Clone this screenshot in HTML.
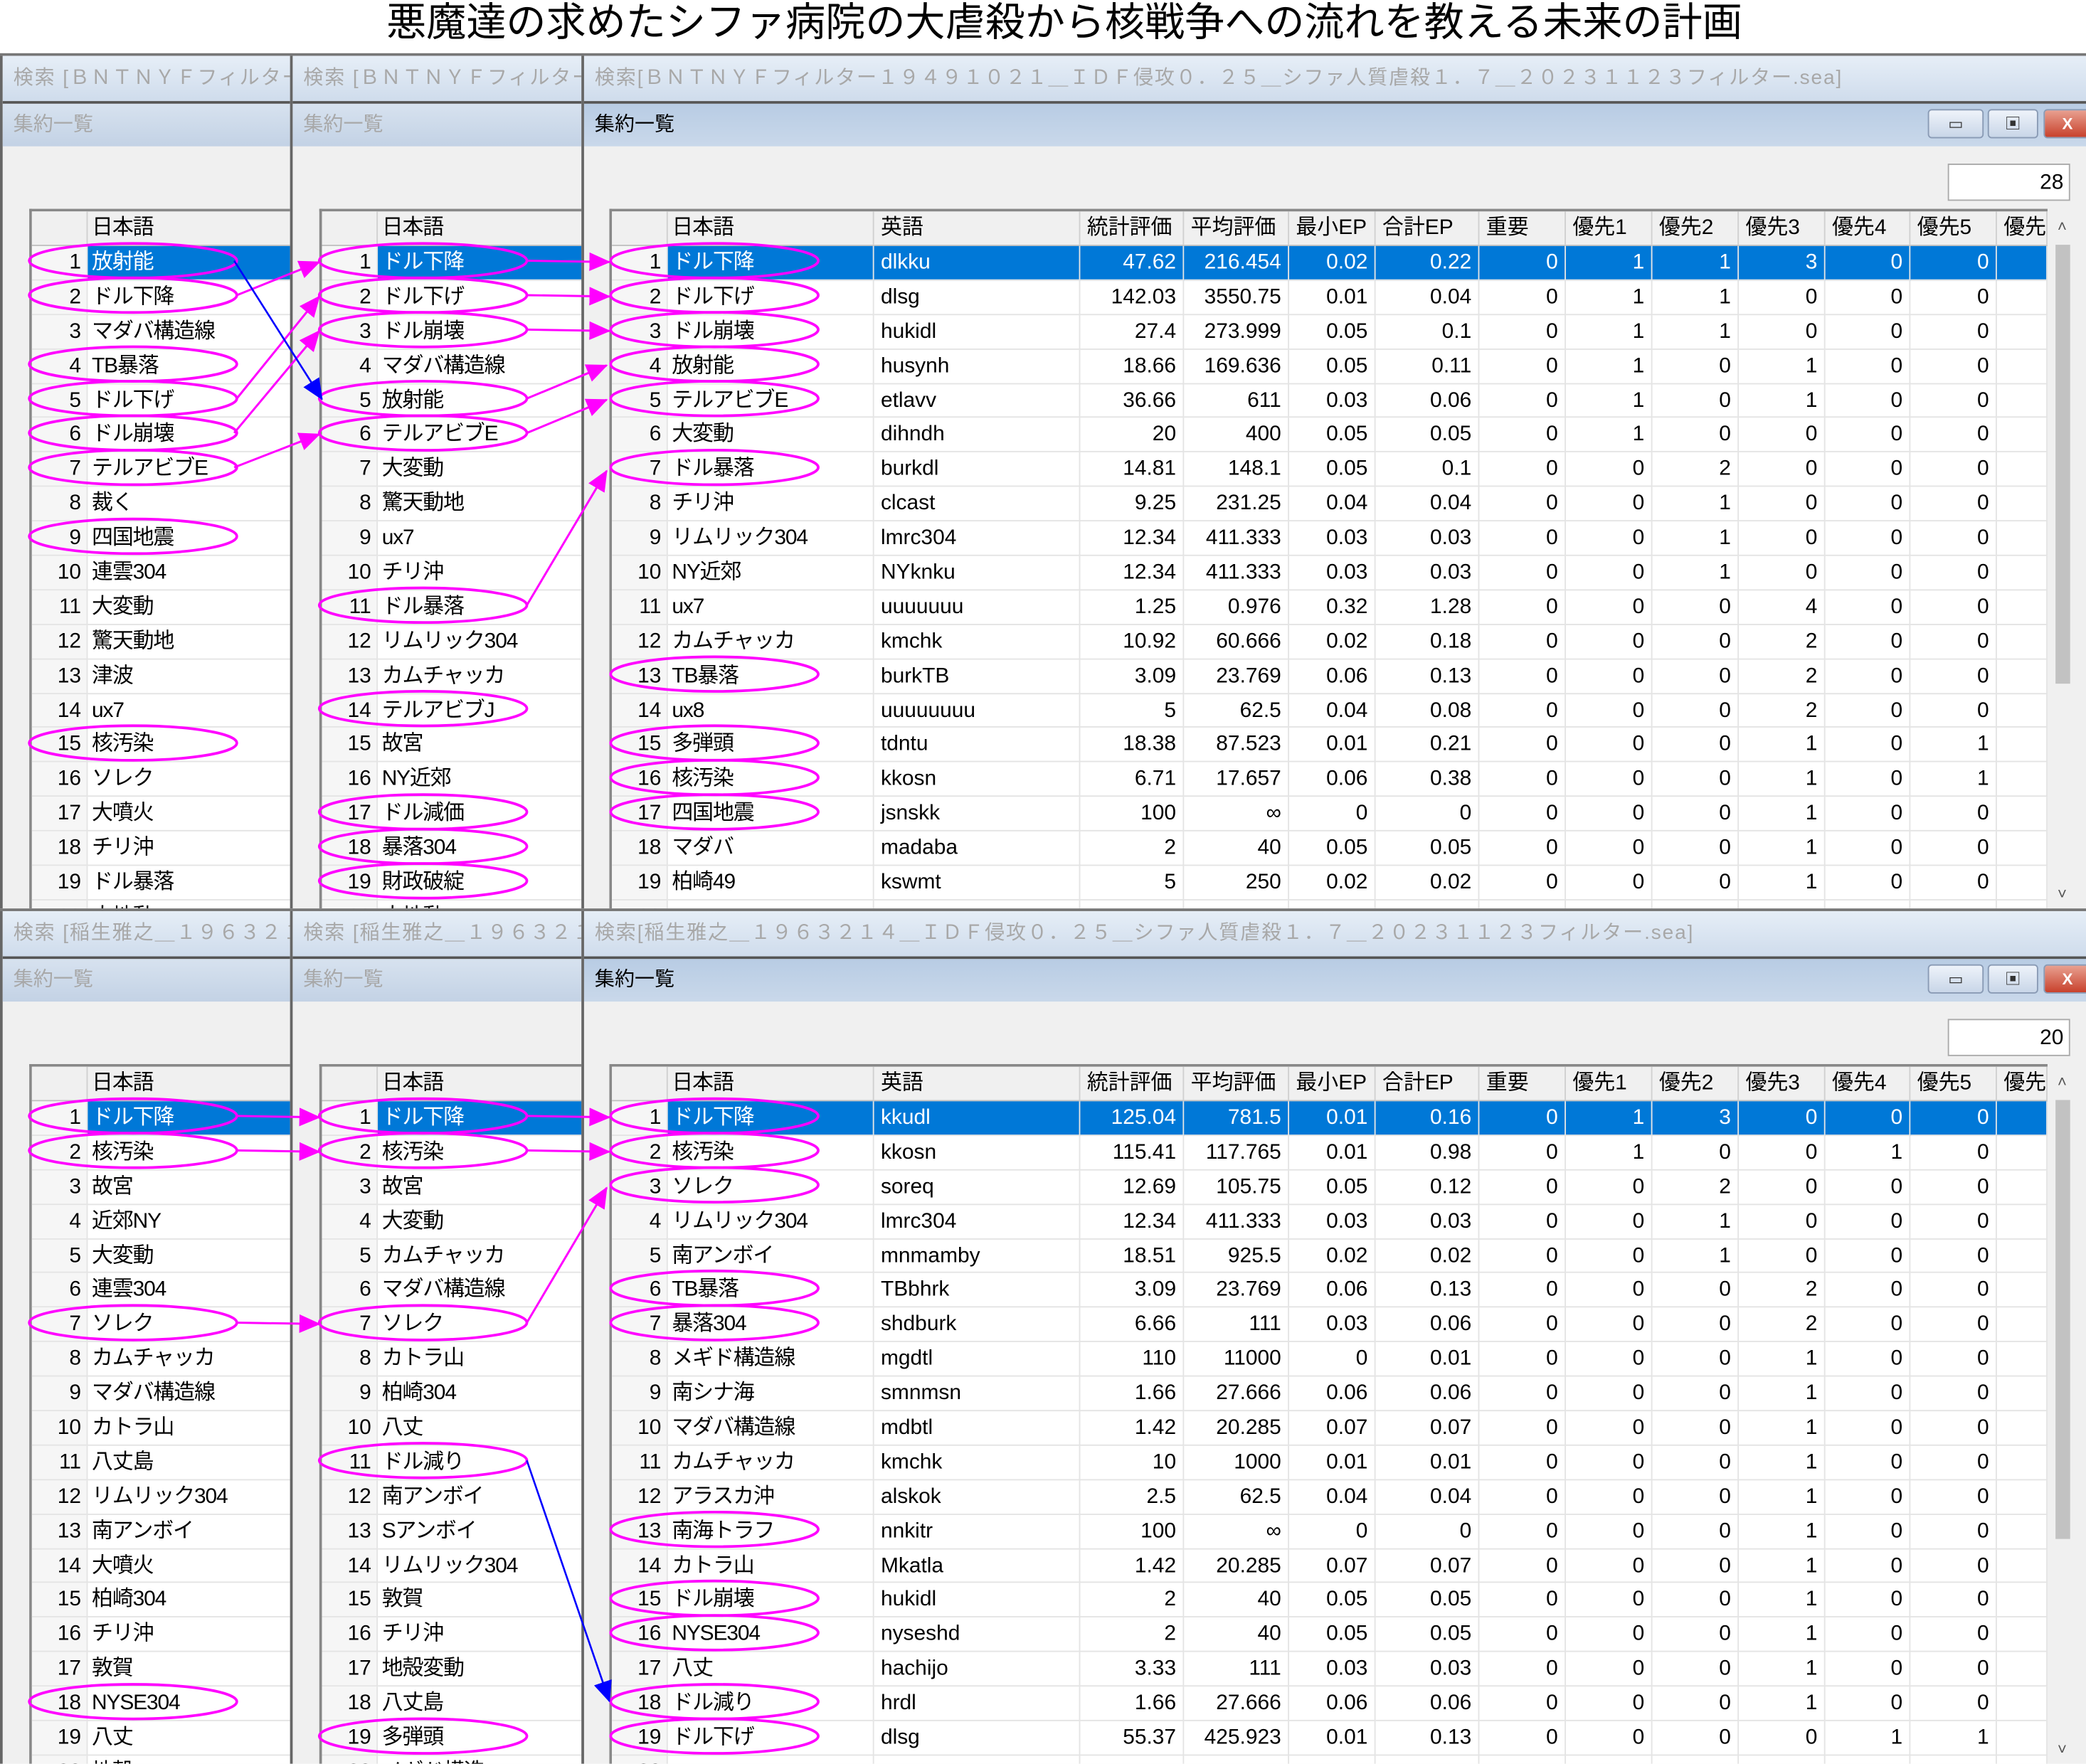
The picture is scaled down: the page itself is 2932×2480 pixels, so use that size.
<!DOCTYPE html>
<html><head><meta charset="utf-8">
<style>
html,body{margin:0;padding:0;background:#fff;width:2932px;height:2478px;overflow:hidden}
#s{position:absolute;left:0;top:0;width:1568px;height:1326px;transform:scale(1.87);transform-origin:0 0;font-family:"Liberation Sans","Noto Sans CJK JP",sans-serif;color:#000}
.ttl{position:absolute;left:0;top:0;width:1600px;text-align:center;font-size:30px;line-height:36px}
.pan{position:absolute;left:0;width:1568px;height:643px;background:#f0f0f0;border-top:2px solid #777;box-sizing:border-box;overflow:hidden}
.w{position:absolute;top:0;height:643px;overflow:hidden;border-left:2px solid #666;box-sizing:border-box;background:#f0f0f0}
.tb{position:absolute;left:0;top:0;right:0;height:34px;background:linear-gradient(#e6eef7,#cfdcec);border-bottom:2px solid #555;color:#a8a8a8;font-size:15px;line-height:34px;padding-left:8px;white-space:nowrap;letter-spacing:1px}
.sb{position:absolute;left:0;top:36px;right:0;height:32px;background:linear-gradient(#d7e2ef,#c3d2e5);color:#a8a8a8;font-size:15px;line-height:32px;padding-left:8px}
.act .sb{background:linear-gradient(#b8cce4,#c9d8ea);color:#000}
.t{position:absolute;top:115px;border-left:2px solid #888;border-top:2px solid #888}
.hd,.r{display:flex}
.hd{height:26px;background:#f0f0f0}
.r{height:25.9px;background:#fff}
.t span{flex:none;box-sizing:border-box;border-right:1px solid #e4e4e4;border-bottom:1px solid #e4e4e4;white-space:nowrap;overflow:hidden;font-size:16px;line-height:25px;padding:0 5px;text-align:right}
.hd span{text-align:left;border-right:1px solid #d0d0d0;border-bottom:1px solid #c0c0c0}
.t span:nth-child(1){width:42px;background:#f6f6f6;padding-right:4px}
.hd span:nth-child(1){background:#f0f0f0}
.t span:nth-child(2){width:200px;text-align:left;padding-left:3px;letter-spacing:-0.6px}
.rt span:nth-child(2){width:155px}
.rt span:nth-child(3){width:155px;text-align:left}
.rt span:nth-child(4){width:78px}
.rt span:nth-child(5){width:79px}
.rt span:nth-child(6){width:65px}
.rt span:nth-child(7){width:78px}
.rt span:nth-child(8),.rt span:nth-child(9),.rt span:nth-child(10),.rt span:nth-child(11),.rt span:nth-child(13){width:65px}
.rt span:nth-child(12){width:64px}
.rt span:nth-child(14){width:38px}
.sel span:not(:first-child){background:#0078d7;color:#fff}
.cnt{position:absolute;left:1025px;top:81px;width:92px;height:28px;background:#fff;border:1px solid #aaa;font-size:16px;line-height:28px;text-align:right;padding-right:4px;box-sizing:border-box}
.btn{position:absolute;top:40px;height:22px;border:1px solid #8a9bb5;border-radius:3px;background:linear-gradient(#eef3fa,#c9d6e8);box-sizing:border-box;font-size:12px;text-align:center;line-height:20px;color:#333}
.scr{position:absolute;left:1103px;top:115px;width:16px;height:530px;background:#f0f0f0;font-size:12px;text-align:center;color:#555}
.thumb{position:absolute;left:3px;top:27px;width:11px;height:330px;background:#c2c2c2}
</style></head><body><div id="s">
<div class="ttl">悪魔達の求めたシファ病院の大虐殺から核戦争への流れを教える未来の計画</div>

<!-- TOP PANEL -->
<div class="pan" style="top:40px">
 <div class="w" style="left:0;width:220px">
  <div class="tb">検索 [ＢＮＴＮＹＦフィルター１９４９</div><div class="sb">集約一覧</div>
  <div class="t" style="left:20px">
   <div class="hd"><span></span><span>日本語</span></div>
   <div class="r sel"><span>1</span><span>放射能</span></div>
   <div class="r"><span>2</span><span>ドル下降</span></div>
   <div class="r"><span>3</span><span>マダバ構造線</span></div>
   <div class="r"><span>4</span><span>TB暴落</span></div>
   <div class="r"><span>5</span><span>ドル下げ</span></div>
   <div class="r"><span>6</span><span>ドル崩壊</span></div>
   <div class="r"><span>7</span><span>テルアビブE</span></div>
   <div class="r"><span>8</span><span>裁く</span></div>
   <div class="r"><span>9</span><span>四国地震</span></div>
   <div class="r"><span>10</span><span>連雲304</span></div>
   <div class="r"><span>11</span><span>大変動</span></div>
   <div class="r"><span>12</span><span>驚天動地</span></div>
   <div class="r"><span>13</span><span>津波</span></div>
   <div class="r"><span>14</span><span>ux7</span></div>
   <div class="r"><span>15</span><span>核汚染</span></div>
   <div class="r"><span>16</span><span>ソレク</span></div>
   <div class="r"><span>17</span><span>大噴火</span></div>
   <div class="r"><span>18</span><span>チリ沖</span></div>
   <div class="r"><span>19</span><span>ドル暴落</span></div>
   <div class="r"><span>20</span><span>大地動</span></div>
  </div>
 </div>
 <div class="w" style="left:218px;width:221px">
  <div class="tb">検索 [ＢＮＴＮＹＦフィルター１９４９</div><div class="sb">集約一覧</div>
  <div class="t" style="left:20px">
   <div class="hd"><span></span><span>日本語</span></div>
   <div class="r sel"><span>1</span><span>ドル下降</span></div>
   <div class="r"><span>2</span><span>ドル下げ</span></div>
   <div class="r"><span>3</span><span>ドル崩壊</span></div>
   <div class="r"><span>4</span><span>マダバ構造線</span></div>
   <div class="r"><span>5</span><span>放射能</span></div>
   <div class="r"><span>6</span><span>テルアビブE</span></div>
   <div class="r"><span>7</span><span>大変動</span></div>
   <div class="r"><span>8</span><span>驚天動地</span></div>
   <div class="r"><span>9</span><span>ux7</span></div>
   <div class="r"><span>10</span><span>チリ沖</span></div>
   <div class="r"><span>11</span><span>ドル暴落</span></div>
   <div class="r"><span>12</span><span>リムリック304</span></div>
   <div class="r"><span>13</span><span>カムチャッカ</span></div>
   <div class="r"><span>14</span><span>テルアビブJ</span></div>
   <div class="r"><span>15</span><span>故宮</span></div>
   <div class="r"><span>16</span><span>NY近郊</span></div>
   <div class="r"><span>17</span><span>ドル減価</span></div>
   <div class="r"><span>18</span><span>暴落304</span></div>
   <div class="r"><span>19</span><span>財政破綻</span></div>
   <div class="r"><span>20</span><span>大地動</span></div>
  </div>
 </div>
 <div class="w act" style="left:437px;width:1131px">
  <div class="tb">検索[ＢＮＴＮＹＦフィルター１９４９１０２１＿ＩＤＦ侵攻０．２５＿シファ人質虐殺１．７＿２０２３１１２３フィルター.sea]</div><div class="sb">集約一覧</div>
  <div class="btn" style="left:1010px;width:42px">▭</div><div class="btn" style="left:1055px;width:38px">▣</div><div class="btn" style="left:1097px;width:36px;background:linear-gradient(#e8a090,#c8412c);color:#fff;font-weight:bold">X</div>
  <div class="cnt">28</div>
  <div class="t rt" style="left:19px">
   <div class="hd"><span></span><span>日本語</span><span>英語</span><span>統計評価</span><span>平均評価</span><span>最小EP</span><span>合計EP</span><span>重要</span><span>優先1</span><span>優先2</span><span>優先3</span><span>優先4</span><span>優先5</span><span>優先</span></div>
   <div class="r sel"><span>1</span><span>ドル下降</span><span>dlkku</span><span>47.62</span><span>216.454</span><span>0.02</span><span>0.22</span><span>0</span><span>1</span><span>1</span><span>3</span><span>0</span><span>0</span><span></span></div>
   <div class="r"><span>2</span><span>ドル下げ</span><span>dlsg</span><span>142.03</span><span>3550.75</span><span>0.01</span><span>0.04</span><span>0</span><span>1</span><span>1</span><span>0</span><span>0</span><span>0</span><span></span></div>
   <div class="r"><span>3</span><span>ドル崩壊</span><span>hukidl</span><span>27.4</span><span>273.999</span><span>0.05</span><span>0.1</span><span>0</span><span>1</span><span>1</span><span>0</span><span>0</span><span>0</span><span></span></div>
   <div class="r"><span>4</span><span>放射能</span><span>husynh</span><span>18.66</span><span>169.636</span><span>0.05</span><span>0.11</span><span>0</span><span>1</span><span>0</span><span>1</span><span>0</span><span>0</span><span></span></div>
   <div class="r"><span>5</span><span>テルアビブE</span><span>etlavv</span><span>36.66</span><span>611</span><span>0.03</span><span>0.06</span><span>0</span><span>1</span><span>0</span><span>1</span><span>0</span><span>0</span><span></span></div>
   <div class="r"><span>6</span><span>大変動</span><span>dihndh</span><span>20</span><span>400</span><span>0.05</span><span>0.05</span><span>0</span><span>1</span><span>0</span><span>0</span><span>0</span><span>0</span><span></span></div>
   <div class="r"><span>7</span><span>ドル暴落</span><span>burkdl</span><span>14.81</span><span>148.1</span><span>0.05</span><span>0.1</span><span>0</span><span>0</span><span>2</span><span>0</span><span>0</span><span>0</span><span></span></div>
   <div class="r"><span>8</span><span>チリ沖</span><span>clcast</span><span>9.25</span><span>231.25</span><span>0.04</span><span>0.04</span><span>0</span><span>0</span><span>1</span><span>0</span><span>0</span><span>0</span><span></span></div>
   <div class="r"><span>9</span><span>リムリック304</span><span>lmrc304</span><span>12.34</span><span>411.333</span><span>0.03</span><span>0.03</span><span>0</span><span>0</span><span>1</span><span>0</span><span>0</span><span>0</span><span></span></div>
   <div class="r"><span>10</span><span>NY近郊</span><span>NYknku</span><span>12.34</span><span>411.333</span><span>0.03</span><span>0.03</span><span>0</span><span>0</span><span>1</span><span>0</span><span>0</span><span>0</span><span></span></div>
   <div class="r"><span>11</span><span>ux7</span><span>uuuuuuu</span><span>1.25</span><span>0.976</span><span>0.32</span><span>1.28</span><span>0</span><span>0</span><span>0</span><span>4</span><span>0</span><span>0</span><span></span></div>
   <div class="r"><span>12</span><span>カムチャッカ</span><span>kmchk</span><span>10.92</span><span>60.666</span><span>0.02</span><span>0.18</span><span>0</span><span>0</span><span>0</span><span>2</span><span>0</span><span>0</span><span></span></div>
   <div class="r"><span>13</span><span>TB暴落</span><span>burkTB</span><span>3.09</span><span>23.769</span><span>0.06</span><span>0.13</span><span>0</span><span>0</span><span>0</span><span>2</span><span>0</span><span>0</span><span></span></div>
   <div class="r"><span>14</span><span>ux8</span><span>uuuuuuuu</span><span>5</span><span>62.5</span><span>0.04</span><span>0.08</span><span>0</span><span>0</span><span>0</span><span>2</span><span>0</span><span>0</span><span></span></div>
   <div class="r"><span>15</span><span>多弾頭</span><span>tdntu</span><span>18.38</span><span>87.523</span><span>0.01</span><span>0.21</span><span>0</span><span>0</span><span>0</span><span>1</span><span>0</span><span>1</span><span></span></div>
   <div class="r"><span>16</span><span>核汚染</span><span>kkosn</span><span>6.71</span><span>17.657</span><span>0.06</span><span>0.38</span><span>0</span><span>0</span><span>0</span><span>1</span><span>0</span><span>1</span><span></span></div>
   <div class="r"><span>17</span><span>四国地震</span><span>jsnskk</span><span>100</span><span>∞</span><span>0</span><span>0</span><span>0</span><span>0</span><span>0</span><span>1</span><span>0</span><span>0</span><span></span></div>
   <div class="r"><span>18</span><span>マダバ</span><span>madaba</span><span>2</span><span>40</span><span>0.05</span><span>0.05</span><span>0</span><span>0</span><span>0</span><span>1</span><span>0</span><span>0</span><span></span></div>
   <div class="r"><span>19</span><span>柏崎49</span><span>kswmt</span><span>5</span><span>250</span><span>0.02</span><span>0.02</span><span>0</span><span>0</span><span>0</span><span>1</span><span>0</span><span>0</span><span></span></div>
   <div class="r"><span>20</span><span></span><span></span><span></span><span></span><span></span><span></span><span></span><span></span><span></span><span></span><span></span><span></span><span></span></div>
  </div>
  <div class="scr"><div style="line-height:26px">˄</div><div class="thumb"></div><div style="position:absolute;bottom:8px;width:16px">˅</div></div>
 </div>
</div>

<!-- BOTTOM PANEL -->
<div class="pan" style="top:683px">
 <div class="w" style="left:0;width:220px">
  <div class="tb">検索 [稲生雅之＿１９６３２１４</div><div class="sb">集約一覧</div>
  <div class="t" style="left:20px">
   <div class="hd"><span></span><span>日本語</span></div>
   <div class="r sel"><span>1</span><span>ドル下降</span></div>
   <div class="r"><span>2</span><span>核汚染</span></div>
   <div class="r"><span>3</span><span>故宮</span></div>
   <div class="r"><span>4</span><span>近郊NY</span></div>
   <div class="r"><span>5</span><span>大変動</span></div>
   <div class="r"><span>6</span><span>連雲304</span></div>
   <div class="r"><span>7</span><span>ソレク</span></div>
   <div class="r"><span>8</span><span>カムチャッカ</span></div>
   <div class="r"><span>9</span><span>マダバ構造線</span></div>
   <div class="r"><span>10</span><span>カトラ山</span></div>
   <div class="r"><span>11</span><span>八丈島</span></div>
   <div class="r"><span>12</span><span>リムリック304</span></div>
   <div class="r"><span>13</span><span>南アンボイ</span></div>
   <div class="r"><span>14</span><span>大噴火</span></div>
   <div class="r"><span>15</span><span>柏崎304</span></div>
   <div class="r"><span>16</span><span>チリ沖</span></div>
   <div class="r"><span>17</span><span>敦賀</span></div>
   <div class="r"><span>18</span><span>NYSE304</span></div>
   <div class="r"><span>19</span><span>八丈</span></div>
   <div class="r"><span>20</span><span>地殻</span></div>
  </div>
 </div>
 <div class="w" style="left:218px;width:221px">
  <div class="tb">検索 [稲生雅之＿１９６３２１４</div><div class="sb">集約一覧</div>
  <div class="t" style="left:20px">
   <div class="hd"><span></span><span>日本語</span></div>
   <div class="r sel"><span>1</span><span>ドル下降</span></div>
   <div class="r"><span>2</span><span>核汚染</span></div>
   <div class="r"><span>3</span><span>故宮</span></div>
   <div class="r"><span>4</span><span>大変動</span></div>
   <div class="r"><span>5</span><span>カムチャッカ</span></div>
   <div class="r"><span>6</span><span>マダバ構造線</span></div>
   <div class="r"><span>7</span><span>ソレク</span></div>
   <div class="r"><span>8</span><span>カトラ山</span></div>
   <div class="r"><span>9</span><span>柏崎304</span></div>
   <div class="r"><span>10</span><span>八丈</span></div>
   <div class="r"><span>11</span><span>ドル減り</span></div>
   <div class="r"><span>12</span><span>南アンボイ</span></div>
   <div class="r"><span>13</span><span>Sアンボイ</span></div>
   <div class="r"><span>14</span><span>リムリック304</span></div>
   <div class="r"><span>15</span><span>敦賀</span></div>
   <div class="r"><span>16</span><span>チリ沖</span></div>
   <div class="r"><span>17</span><span>地殻変動</span></div>
   <div class="r"><span>18</span><span>八丈島</span></div>
   <div class="r"><span>19</span><span>多弾頭</span></div>
   <div class="r"><span>20</span><span>メギド構造</span></div>
  </div>
 </div>
 <div class="w act" style="left:437px;width:1131px">
  <div class="tb">検索[稲生雅之＿１９６３２１４＿ＩＤＦ侵攻０．２５＿シファ人質虐殺１．７＿２０２３１１２３フィルター.sea]</div><div class="sb">集約一覧</div>
  <div class="btn" style="left:1010px;width:42px">▭</div><div class="btn" style="left:1055px;width:38px">▣</div><div class="btn" style="left:1097px;width:36px;background:linear-gradient(#e8a090,#c8412c);color:#fff;font-weight:bold">X</div>
  <div class="cnt">20</div>
  <div class="t rt" style="left:19px">
   <div class="hd"><span></span><span>日本語</span><span>英語</span><span>統計評価</span><span>平均評価</span><span>最小EP</span><span>合計EP</span><span>重要</span><span>優先1</span><span>優先2</span><span>優先3</span><span>優先4</span><span>優先5</span><span>優先</span></div>
   <div class="r sel"><span>1</span><span>ドル下降</span><span>kkudl</span><span>125.04</span><span>781.5</span><span>0.01</span><span>0.16</span><span>0</span><span>1</span><span>3</span><span>0</span><span>0</span><span>0</span><span></span></div>
   <div class="r"><span>2</span><span>核汚染</span><span>kkosn</span><span>115.41</span><span>117.765</span><span>0.01</span><span>0.98</span><span>0</span><span>1</span><span>0</span><span>0</span><span>1</span><span>0</span><span></span></div>
   <div class="r"><span>3</span><span>ソレク</span><span>soreq</span><span>12.69</span><span>105.75</span><span>0.05</span><span>0.12</span><span>0</span><span>0</span><span>2</span><span>0</span><span>0</span><span>0</span><span></span></div>
   <div class="r"><span>4</span><span>リムリック304</span><span>lmrc304</span><span>12.34</span><span>411.333</span><span>0.03</span><span>0.03</span><span>0</span><span>0</span><span>1</span><span>0</span><span>0</span><span>0</span><span></span></div>
   <div class="r"><span>5</span><span>南アンボイ</span><span>mnmamby</span><span>18.51</span><span>925.5</span><span>0.02</span><span>0.02</span><span>0</span><span>0</span><span>1</span><span>0</span><span>0</span><span>0</span><span></span></div>
   <div class="r"><span>6</span><span>TB暴落</span><span>TBbhrk</span><span>3.09</span><span>23.769</span><span>0.06</span><span>0.13</span><span>0</span><span>0</span><span>0</span><span>2</span><span>0</span><span>0</span><span></span></div>
   <div class="r"><span>7</span><span>暴落304</span><span>shdburk</span><span>6.66</span><span>111</span><span>0.03</span><span>0.06</span><span>0</span><span>0</span><span>0</span><span>2</span><span>0</span><span>0</span><span></span></div>
   <div class="r"><span>8</span><span>メギド構造線</span><span>mgdtl</span><span>110</span><span>11000</span><span>0</span><span>0.01</span><span>0</span><span>0</span><span>0</span><span>1</span><span>0</span><span>0</span><span></span></div>
   <div class="r"><span>9</span><span>南シナ海</span><span>smnmsn</span><span>1.66</span><span>27.666</span><span>0.06</span><span>0.06</span><span>0</span><span>0</span><span>0</span><span>1</span><span>0</span><span>0</span><span></span></div>
   <div class="r"><span>10</span><span>マダバ構造線</span><span>mdbtl</span><span>1.42</span><span>20.285</span><span>0.07</span><span>0.07</span><span>0</span><span>0</span><span>0</span><span>1</span><span>0</span><span>0</span><span></span></div>
   <div class="r"><span>11</span><span>カムチャッカ</span><span>kmchk</span><span>10</span><span>1000</span><span>0.01</span><span>0.01</span><span>0</span><span>0</span><span>0</span><span>1</span><span>0</span><span>0</span><span></span></div>
   <div class="r"><span>12</span><span>アラスカ沖</span><span>alskok</span><span>2.5</span><span>62.5</span><span>0.04</span><span>0.04</span><span>0</span><span>0</span><span>0</span><span>1</span><span>0</span><span>0</span><span></span></div>
   <div class="r"><span>13</span><span>南海トラフ</span><span>nnkitr</span><span>100</span><span>∞</span><span>0</span><span>0</span><span>0</span><span>0</span><span>0</span><span>1</span><span>0</span><span>0</span><span></span></div>
   <div class="r"><span>14</span><span>カトラ山</span><span>Mkatla</span><span>1.42</span><span>20.285</span><span>0.07</span><span>0.07</span><span>0</span><span>0</span><span>0</span><span>1</span><span>0</span><span>0</span><span></span></div>
   <div class="r"><span>15</span><span>ドル崩壊</span><span>hukidl</span><span>2</span><span>40</span><span>0.05</span><span>0.05</span><span>0</span><span>0</span><span>0</span><span>1</span><span>0</span><span>0</span><span></span></div>
   <div class="r"><span>16</span><span>NYSE304</span><span>nyseshd</span><span>2</span><span>40</span><span>0.05</span><span>0.05</span><span>0</span><span>0</span><span>0</span><span>1</span><span>0</span><span>0</span><span></span></div>
   <div class="r"><span>17</span><span>八丈</span><span>hachijo</span><span>3.33</span><span>111</span><span>0.03</span><span>0.03</span><span>0</span><span>0</span><span>0</span><span>1</span><span>0</span><span>0</span><span></span></div>
   <div class="r"><span>18</span><span>ドル減り</span><span>hrdl</span><span>1.66</span><span>27.666</span><span>0.06</span><span>0.06</span><span>0</span><span>0</span><span>0</span><span>1</span><span>0</span><span>0</span><span></span></div>
   <div class="r"><span>19</span><span>ドル下げ</span><span>dlsg</span><span>55.37</span><span>425.923</span><span>0.01</span><span>0.13</span><span>0</span><span>0</span><span>0</span><span>0</span><span>1</span><span>1</span><span></span></div>
   <div class="r"><span>20</span><span></span><span></span><span></span><span></span><span></span><span></span><span></span><span></span><span></span><span></span><span></span><span></span><span></span></div>
  </div>
  <div class="scr"><div style="line-height:26px">˄</div><div class="thumb"></div><div style="position:absolute;bottom:8px;width:16px">˅</div></div>
 </div>
</div>

<svg style="position:absolute;left:0;top:0" width="1568" height="1326" viewBox="0 0 1568 1326">
<defs>
<marker id="m" markerUnits="userSpaceOnUse" markerWidth="16" markerHeight="14" refX="15" refY="7" orient="auto"><path d="M0,0 L16,7 L0,14 z" fill="#f0f"/></marker>
<marker id="b" markerUnits="userSpaceOnUse" markerWidth="16" markerHeight="14" refX="15" refY="7" orient="auto"><path d="M0,0 L16,7 L0,14 z" fill="#00f"/></marker>
</defs>
<g fill="none" stroke="#f0f" stroke-width="2">
<ellipse cx="100" cy="196" rx="78" ry="13"/><ellipse cx="100" cy="221.9" rx="78" ry="13"/><ellipse cx="100" cy="273.7" rx="78" ry="13"/><ellipse cx="100" cy="299.6" rx="78" ry="13"/><ellipse cx="100" cy="325.5" rx="78" ry="13"/><ellipse cx="100" cy="351.4" rx="78" ry="13"/><ellipse cx="100" cy="403.2" rx="78" ry="13"/><ellipse cx="100" cy="558.6" rx="78" ry="13"/>
<ellipse cx="318" cy="196" rx="78" ry="13"/><ellipse cx="318" cy="221.9" rx="78" ry="13"/><ellipse cx="318" cy="247.8" rx="78" ry="13"/><ellipse cx="318" cy="299.6" rx="78" ry="13"/><ellipse cx="318" cy="325.5" rx="78" ry="13"/><ellipse cx="318" cy="455" rx="78" ry="13"/><ellipse cx="318" cy="532.7" rx="78" ry="13"/><ellipse cx="318" cy="610.4" rx="78" ry="13"/><ellipse cx="318" cy="636.3" rx="78" ry="13"/><ellipse cx="318" cy="662.2" rx="78" ry="13"/>
<ellipse cx="537" cy="196" rx="78" ry="13"/><ellipse cx="537" cy="221.9" rx="78" ry="13"/><ellipse cx="537" cy="247.8" rx="78" ry="13"/><ellipse cx="537" cy="273.7" rx="78" ry="13"/><ellipse cx="537" cy="299.6" rx="78" ry="13"/><ellipse cx="537" cy="351.4" rx="78" ry="13"/><ellipse cx="537" cy="506.8" rx="78" ry="13"/><ellipse cx="537" cy="558.6" rx="78" ry="13"/><ellipse cx="537" cy="584.5" rx="78" ry="13"/><ellipse cx="537" cy="610.4" rx="78" ry="13"/>
<ellipse cx="100" cy="839" rx="78" ry="13"/><ellipse cx="100" cy="864.9" rx="78" ry="13"/><ellipse cx="100" cy="994.4" rx="78" ry="13"/><ellipse cx="100" cy="1279.3" rx="78" ry="13"/>
<ellipse cx="318" cy="839" rx="78" ry="13"/><ellipse cx="318" cy="864.9" rx="78" ry="13"/><ellipse cx="318" cy="994.4" rx="78" ry="13"/><ellipse cx="318" cy="1098" rx="78" ry="13"/><ellipse cx="318" cy="1305.2" rx="78" ry="13"/>
<ellipse cx="537" cy="839" rx="78" ry="13"/><ellipse cx="537" cy="864.9" rx="78" ry="13"/><ellipse cx="537" cy="890.8" rx="78" ry="13"/><ellipse cx="537" cy="968.5" rx="78" ry="13"/><ellipse cx="537" cy="994.4" rx="78" ry="13"/><ellipse cx="537" cy="1149.8" rx="78" ry="13"/><ellipse cx="537" cy="1201.6" rx="78" ry="13"/><ellipse cx="537" cy="1227.5" rx="78" ry="13"/><ellipse cx="537" cy="1279.3" rx="78" ry="13"/><ellipse cx="537" cy="1305.2" rx="78" ry="13"/>
</g>
<g stroke="#f0f" stroke-width="1.6" marker-end="url(#m)">
<line x1="178" y1="221.9" x2="240" y2="197"/>
<line x1="178" y1="299.6" x2="240" y2="222.9"/>
<line x1="176" y1="325.5" x2="240" y2="248.8"/>
<line x1="176" y1="351.4" x2="240" y2="326.5"/>
<line x1="396" y1="196" x2="458" y2="197"/>
<line x1="396" y1="221.9" x2="458" y2="222.9"/>
<line x1="396" y1="247.8" x2="458" y2="248.8"/>
<line x1="396" y1="299.6" x2="456" y2="274.7"/>
<line x1="396" y1="325.5" x2="456" y2="300.6"/>
<line x1="396" y1="455" x2="456" y2="354"/>
<line x1="178" y1="839" x2="240" y2="840"/>
<line x1="178" y1="864.9" x2="240" y2="865.9"/>
<line x1="178" y1="994.4" x2="240" y2="995.4"/>
<line x1="396" y1="839" x2="458" y2="840"/>
<line x1="396" y1="864.9" x2="458" y2="865.9"/>
<line x1="396" y1="994.4" x2="456" y2="893"/>
</g>
<g stroke="#00f" stroke-width="1.4" marker-end="url(#b)">
<line x1="176" y1="196" x2="242" y2="300"/>
<line x1="396" y1="1098" x2="458" y2="1279"/>
</g>
</svg>
</div></body></html>
